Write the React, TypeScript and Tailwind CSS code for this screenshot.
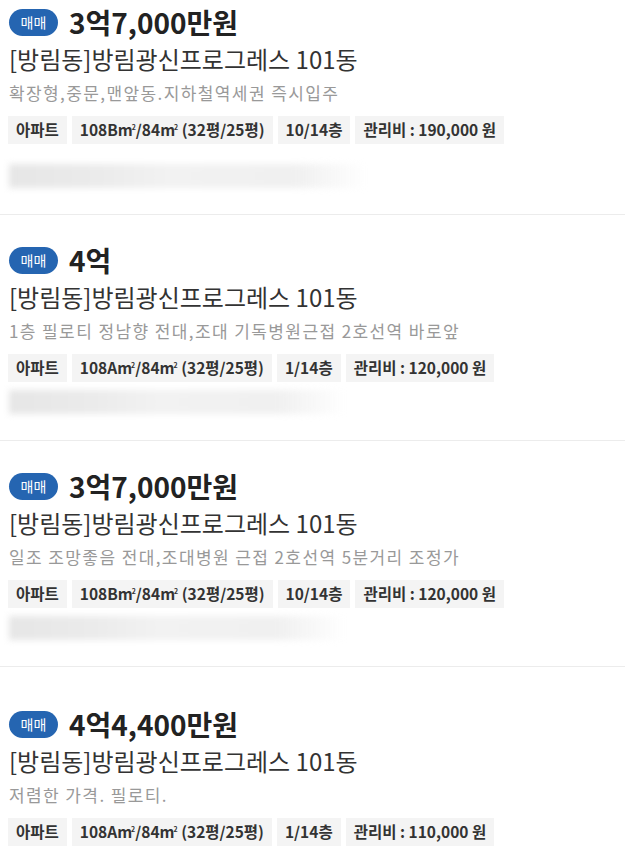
import React from 'react';

type Listing = {
  price: string;
  title: string;
  desc: string;
  tags: string[];
  blurWidth: number;
  padTop: string;
  blurGap: string;
  last?: boolean;
};

const LISTINGS: Listing[] = [
  {
    price: '3억7,000만원',
    title: '[방림동]방림광신프로그레스 101동',
    desc: '확장형,중문,맨앞동.지하철역세권 즉시입주',
    tags: ['아파트', '108Bm²/84m² (32평/25평)', '10/14층', '관리비 : 190,000 원'],
    blurWidth: 358,
    padTop: 'pt-[8px]',
    blurGap: 'mt-[20px]',
  },
  {
    price: '4억',
    title: '[방림동]방림광신프로그레스 101동',
    desc: '1층 필로티 정남향 전대,조대 기독병원근접 2호선역 바로앞',
    tags: ['아파트', '108Am²/84m² (32평/25평)', '1/14층', '관리비 : 120,000 원'],
    blurWidth: 336,
    padTop: 'pt-[31px]',
    blurGap: 'mt-[8px]',
  },
  {
    price: '3억7,000만원',
    title: '[방림동]방림광신프로그레스 101동',
    desc: '일조 조망좋음 전대,조대병원 근접 2호선역 5분거리 조정가',
    tags: ['아파트', '108Bm²/84m² (32평/25평)', '10/14층', '관리비 : 120,000 원'],
    blurWidth: 336,
    padTop: 'pt-[31px]',
    blurGap: 'mt-[8px]',
  },
  {
    price: '4억4,400만원',
    title: '[방림동]방림광신프로그레스 101동',
    desc: '저렴한 가격. 필로티.',
    tags: ['아파트', '108Am²/84m² (32평/25평)', '1/14층', '관리비 : 110,000 원'],
    blurWidth: 336,
    padTop: 'pt-[43px]',
    blurGap: 'mt-[8px]',
    last: true,
  },
];

function Tag({ text }: { text: string }) {
  // split "m²" so the superscript renders small like the original
  const parts = text.split('²');
  return (
    <span className="flex h-[28px] items-center whitespace-pre bg-[#f4f4f4] px-[8px] text-[15.5px] font-bold text-[#333]">
      {parts.map((p, i) => (
        <React.Fragment key={i}>
          {p}
          {i < parts.length - 1 && <sup className="-ml-[1px] text-[7px]">2</sup>}
        </React.Fragment>
      ))}
    </span>
  );
}

function Item({ item }: { item: Listing }) {
  return (
    <article
      className={`${item.padTop} pb-[26px] pl-[9px] ${item.last ? '' : 'border-b border-[#ececec]'}`}
    >
      <div className="flex h-[28px] items-center gap-[11px]">
        <span className="flex h-[27px] w-[49px] items-center justify-center rounded-full bg-[#2565b1] text-[14px] text-white">
          매매
        </span>
        <span className="text-[28px] font-bold leading-none text-[#222]">{item.price}</span>
      </div>
      <h2 className="mt-[8px] text-[24px] leading-[30px] text-[#333]">{item.title}</h2>
      <p className="mt-[7px] text-[17px] leading-[24px] tracking-[1.4px] text-[#999]">
        {item.desc}
      </p>
      <div className="mt-[11px] -ml-[1px] flex gap-[5px]">
        {item.tags.map((t) => (
          <Tag key={t} text={t} />
        ))}
      </div>
      {!item.last && (
        <div
          className={`${item.blurGap} h-[24px] bg-[linear-gradient(90deg,#e6e6e6_0%,#ebebeb_25%,#f2f2f2_45%,#f0f0f0_80%,rgba(255,255,255,0)_100%)] blur-[3px]`}
          style={{ width: item.blurWidth }}
        />
      )}
    </article>
  );
}

export default function App() {
  return (
    <div
      className="h-[862px] w-[625px] overflow-hidden bg-white"
      style={{ fontFamily: '"Noto Sans CJK KR", "Noto Sans", sans-serif' }}
    >
      {LISTINGS.map((item, i) => (
        <Item key={i} item={item} />
      ))}
    </div>
  );
}
